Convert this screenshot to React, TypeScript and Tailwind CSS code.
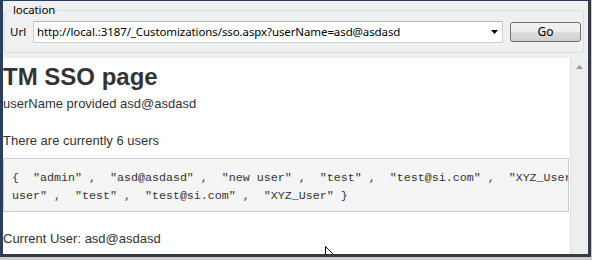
import React from 'react';

const ui = "font-['Segoe_UI','Noto_Sans',sans-serif]";

const users = '{  "admin" ,  "asd@asdasd" ,  "new user" ,  "test" ,  "test@si.com" ,  "XYZ_User" ,  "new';
const users2 = 'user" ,  "test" ,  "test@si.com" ,  "XYZ_User" }';

const App: React.FC = () => {
  return (
    <div className="w-[592px] h-[260px] bg-[#cdcdcd] overflow-hidden">
      <div className="w-[591px] h-[257px] flex flex-col bg-[#f0f0f0] border-t border-l-[3px] border-t-[#2b3f5c] border-l-[#2b3f5c] border-r-[3px] border-b-[3px] border-r-[#363a42] border-b-[#363a42]">
        {/* location group */}
        <fieldset className={`ml-[1px] mr-[4px] mt-[1px] border border-[#d5dfe5] rounded-[3px] pb-[9px] ${ui}`}>
          <legend className="ml-[6px] px-[2px] text-[11.5px] tracking-[-0.1px] leading-[16px] text-black">location</legend>
          <div className="flex items-center pl-[5px] pr-[2px] mt-[3px]">
            <span className="w-[23px] text-[11.5px] text-black">Url</span>
            <div className="w-[470px] h-[22px] flex items-center bg-white border border-[#cdd2d9] border-t-[#b5b9c0] pl-[3px] pr-[3px]">
              <span className="flex-1 text-[11.5px] tracking-[-0.1px] text-black whitespace-nowrap overflow-hidden">
                http://local.:3187/_Customizations/sso.aspx?userName=asd@asdasd
              </span>
              <svg width="7" height="4" viewBox="0 0 7 4" className="mr-[1px]">
                <path d="M0 0 H7 L3.5 4 Z" fill="#000" />
              </svg>
            </div>
            <button className="ml-[7px] w-[71px] h-[20px] rounded-[3px] border border-[#707070] bg-[linear-gradient(#f4f4f4,#ebebeb_50%,#dddddd_50%,#d0d0d0)] text-[12px] leading-[18px] text-black">
              Go
            </button>
          </div>
        </fieldset>

        {/* page view */}
        <div className="flex flex-1 mt-[5px] min-h-0">
          <div className="relative flex-1 bg-white overflow-hidden text-[#333] font-['Liberation_Sans',Arial,sans-serif]">
            <h1 className="mt-[5px] text-[24px] leading-[28px] font-bold">TM SSO page</h1>
            <p className="mt-[4px] text-[13px] leading-[18px]">userName provided asd@asdasd</p>
            <p className="mt-[19px] text-[13px] leading-[18px]">There are currently 6 users</p>
            <pre className="mt-[8px] mr-[1px] pt-[10px] pb-[6px] px-[8px] bg-[#f5f5f5] border border-[#cccccc] overflow-hidden whitespace-pre text-[11.67px] leading-[18px] font-['Liberation_Mono','Courier_New',monospace]">
              {users}
              {'\n'}
              {users2}
            </pre>
            <p className="mt-[18px] text-[13px] leading-[18px]">Current User: asd@asdasd</p>
            <svg width="13" height="20" viewBox="0 0 13 20" className="absolute left-[322px] top-[188px]">
              <path d="M0.5 0.5 V16 L4.3 12.4 L7 18.5 L9 17.6 L6.4 11.6 H11.5 Z" fill="#fff" stroke="#000" strokeWidth="1" />
            </svg>
          </div>
          <div className="w-[18px] bg-[#eeeeee] border-l border-[#e2e2e2] flex justify-center pt-[7px]">
            <svg width="7" height="4" viewBox="0 0 7 4">
              <path d="M0 4 H7 L3.5 0 Z" fill="#9a9a9a" />
            </svg>
          </div>
        </div>
      </div>
    </div>
  );
};

export default App;
